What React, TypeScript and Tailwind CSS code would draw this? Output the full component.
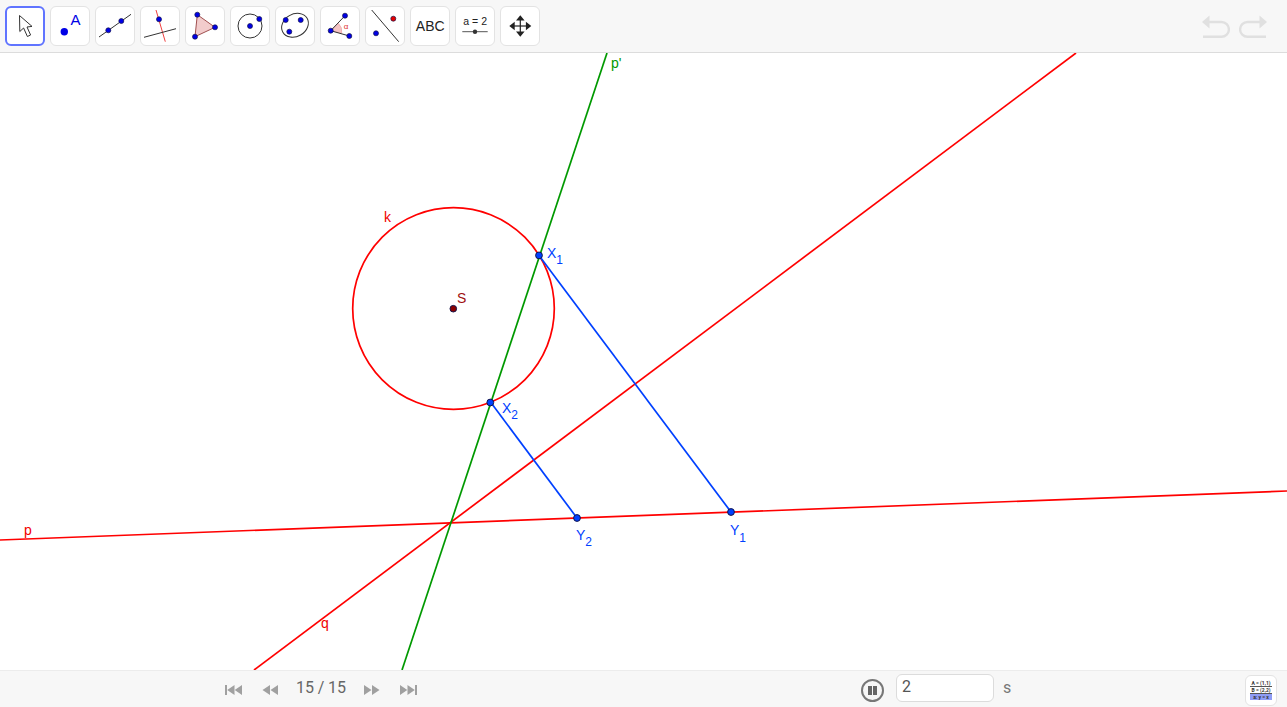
import React from 'react';

const BLUE = '#0000e6';

function Dot({ x, y, r = 2.5, fill = BLUE, line = 0.7 }: { x: number; y: number; r?: number; fill?: string; line?: number }) {
  return <circle cx={x} cy={y} r={r} fill={fill} stroke="#15154a" strokeWidth={line} />;
}

function ToolButton({ active, children }: { active?: boolean; children: React.ReactNode }) {
  return (
    <div
      className={
        active
          ? 'w-10 h-10 rounded-md bg-white border-2 border-[#6074ff] flex items-center justify-center'
          : 'w-10 h-10 rounded-md bg-white border border-[#e3e3e3] flex items-center justify-center'
      }
    >
      <svg width="36" height="36" viewBox="-1 0 36 36" className="shrink-0">
        {children}
      </svg>
    </div>
  );
}

const tools: React.ReactNode[] = [
  <path key="a" d="M11.5 7.5 L11.8 23.5 L15.6 20 L19.4 28.5 L22.6 27 L19 19 L24 18.4 Z" fill="#fff" stroke="#333" strokeWidth="1" strokeLinejoin="round" />,
  <g key="b">
    <circle cx="11.3" cy="23.7" r="3.7" fill={BLUE} />
    <text x="17.4" y="17" fontSize="15" fill={BLUE} fontFamily="'Liberation Sans', sans-serif">A</text>
  </g>,
  <g key="c">
    <line x1="1" y1="29" x2="33" y2="6.3" stroke="#333" strokeWidth="1" />
    <Dot x={10.3} y={22.3} />
    <Dot x={23.3} y={13} />
  </g>,
  <g key="d">
    <line x1="13" y1="2" x2="22.3" y2="33.7" stroke="#f04040" strokeWidth="1" />
    <line x1="1" y1="29.3" x2="33" y2="20.7" stroke="#333" strokeWidth="1" />
    <Dot x={16} y={11.3} />
  </g>,
  <g key="e">
    <path d="M9.3 6.7 L27 19.3 L7 28.7 Z" fill="#f2cccc" stroke="#a05050" strokeWidth="1" />
    <Dot x={9.3} y={6.7} />
    <Dot x={27} y={19.3} />
    <Dot x={7} y={28.7} />
  </g>,
  <g key="f">
    <circle cx="17" cy="18" r="12" fill="none" stroke="#333" strokeWidth="1" />
    <Dot x={17} y={18} />
    <Dot x={26.3} y={11} />
  </g>,
  <g key="g">
    <ellipse cx="17" cy="17.3" rx="14" ry="11.2" transform="rotate(-30 17 17.3)" fill="none" stroke="#333" strokeWidth="1" />
    <Dot x={7.7} y={12} />
    <Dot x={22.7} y={12} />
    <Dot x={11.3} y={23.7} />
  </g>,
  <g key="h">
    <path d="M7.7 22.7 L15.3 15.3 A11 11 0 0 1 18.7 25.3 Z" fill="#f5c4c4" stroke="#e89090" strokeWidth="0.5" />
    <path d="M22 7.7 L7.7 22.7 L26.3 28" fill="none" stroke="#333" strokeWidth="1" />
    <text x="20.8" y="21" fontSize="8" fill="#e03030" fontFamily="'Liberation Sans', sans-serif">α</text>
    <Dot x={22} y={7.7} />
    <Dot x={7.7} y={22.7} />
    <Dot x={26.3} y={28} />
  </g>,
  <g key="i">
    <line x1="3.7" y1="2" x2="30.7" y2="33.7" stroke="#333" strokeWidth="1" />
    <Dot x={25.3} y={10.7} fill="#e60000" />
    <Dot x={8} y={25.3} />
  </g>,
  <text key="j" x="17.2" y="23" textAnchor="middle" fontSize="14" fill="#222" fontFamily="'Liberation Sans', sans-serif">ABC</text>,
  <g key="k">
    <text x="17.2" y="17" textAnchor="middle" fontSize="10.5" fill="#222" fontFamily="'Liberation Sans', sans-serif">a = 2</text>
    <line x1="4.3" y1="23.7" x2="29.7" y2="23.7" stroke="#555" strokeWidth="1" />
    <circle cx="17" cy="23.7" r="2.2" fill="#333" />
  </g>,
  <g key="l" fill="#222" stroke="#222">
    <line x1="9" y1="18" x2="26" y2="18" strokeWidth="1.2" />
    <line x1="17.3" y1="10" x2="17.3" y2="26" strokeWidth="1.2" />
    <path d="M17.3 7.2 L21.6 12.6 L13 12.6 Z M17.3 28.8 L21.6 23.4 L13 23.4 Z M6.3 18 L11.7 13.7 L11.7 22.3 Z M28.3 18 L22.9 13.7 L22.9 22.3 Z" stroke="none" />
  </g>,
];

function Arrow({ dir, bar }: { dir: 'left' | 'right'; bar?: boolean }) {
  return (
    <svg width={bar ? 17 : 16} height="10" viewBox={bar ? '0 0 17 10' : '0 0 16 10'} className={dir === 'right' ? 'rotate-180' : ''}>
      {bar ? (
        <path d="M0 0 H2 V10 H0 Z M9.5 0 L2.2 5 L9.5 10 Z M17 0 L9.7 5 L17 10 Z" fill="#a0a0a0" />
      ) : (
        <path d="M8 0 L0.5 5 L8 10 Z M16 0 L8.5 5 L16 10 Z" fill="#a0a0a0" />
      )}
    </svg>
  );
}

function Label({ x, y, fill, text, sub, dy = 6 }: { x: number; y: number; fill: string; text: string; sub?: string; dy?: number }) {
  return (
    <text x={x} y={y} fill={fill} fontSize="14" fontFamily="'Liberation Sans', sans-serif">
      {text}
      {sub && (
        <tspan dy={dy} fontSize="12">
          {sub}
        </tspan>
      )}
    </text>
  );
}

export default function App() {
  return (
    <div className="w-[1287px] h-[707px] flex flex-col overflow-hidden bg-white font-['Roboto',sans-serif]">
      <div className="h-[53px] shrink-0 bg-[#f7f7f7] border-b border-[#dcdcdc] flex items-start pl-[5px] pt-[6px] pr-[20px]">
        <div className="flex gap-[5px]">
          {tools.map((tool, i) => (
            <ToolButton key={i} active={i === 0}>
              {tool}
            </ToolButton>
          ))}
        </div>
        <div className="ml-auto flex gap-[9px] mt-[9px]">
          <svg width="28" height="23" viewBox="0 0 28 23" fill="none">
            <path d="M0 7 L7.5 0.5 V13.5 Z" fill="#e0e0e0" />
            <path d="M7 7 H19.5 A7.4 7.4 0 0 1 19.5 21.8 H1" stroke="#e0e0e0" strokeWidth="2.4" />
          </svg>
          <svg width="28" height="23" viewBox="0 0 28 23" fill="none">
            <path d="M28 7 L20.5 0.5 V13.5 Z" fill="#e0e0e0" />
            <path d="M21 7 H8.5 A7.4 7.4 0 0 0 8.5 21.8 H27" stroke="#e0e0e0" strokeWidth="2.4" />
          </svg>
        </div>
      </div>

      <div className="flex-1 min-h-0 bg-white">
        <svg width="1287" height="617" viewBox="0 53 1287 617" className="block">
          <circle cx="453.5" cy="308.5" r="100.8" fill="none" stroke="#ff0000" strokeWidth="1.7" />
          <line x1="0" y1="540" x2="1287" y2="491" stroke="#ff0000" strokeWidth="1.7" />
          <line x1="254" y1="670" x2="1076" y2="53" stroke="#ff0000" strokeWidth="1.7" />
          <line x1="402" y1="670" x2="607" y2="53" stroke="#009900" strokeWidth="1.7" />
          <line x1="539" y1="255.5" x2="731" y2="512" stroke="#0040ff" strokeWidth="1.7" />
          <line x1="490.5" y1="402" x2="577" y2="518" stroke="#0040ff" strokeWidth="1.7" />
          <Dot x={453.3} y={308.7} r={3.3} fill="#8b0000" line={1} />
          <Dot x={539} y={255.4} r={3.4} fill="#0040ff" line={1} />
          <Dot x={490.3} y={402.5} r={3.4} fill="#0040ff" line={1} />
          <Dot x={577} y={518} r={3.4} fill="#0040ff" line={1} />
          <Dot x={731} y={512} r={3.4} fill="#0040ff" line={1} />
          <Label x={384} y={222} fill="#f00000" text="k" />
          <Label x={457} y={303} fill="#a01010" text="S" />
          <Label x={611} y={68} fill="#009900" text="p'" />
          <Label x={24} y={535} fill="#f00000" text="p" />
          <Label x={321} y={628} fill="#f00000" text="q" />
          <Label x={547} y={258} fill="#0040ff" text="X" sub="1" />
          <Label x={502} y={413} fill="#0040ff" text="X" sub="2" />
          <Label x={576} y={539.5} fill="#0040ff" text="Y" sub="2" />
          <Label x={730} y={535} fill="#0040ff" text="Y" sub="1" dy={7} />
        </svg>
      </div>

      <div className="h-[37px] shrink-0 bg-[#f7f7f7] border-t border-[#ececec] flex items-center pl-[225px] pr-[10px]">
        <div className="flex items-center gap-[20px] mt-[2px]">
          <Arrow dir="left" bar />
          <Arrow dir="left" />
        </div>
        <span className="ml-[18px] w-[50px] text-center text-base leading-5 tracking-[-0.1px] whitespace-nowrap text-[#666] -mt-[3px]">15 / 15</span>
        <div className="ml-[18px] flex items-center gap-[20px] mt-[2px]">
          <Arrow dir="right" />
          <Arrow dir="right" bar />
        </div>
        <div className="ml-[444px] w-[23px] h-[23px] rounded-full border-2 border-[#777] bg-[#f7f7f7] flex items-center justify-center gap-[1.5px] mt-[2px]">
          <span className="w-[3.5px] h-[9px] bg-[#666]" />
          <span className="w-[3.5px] h-[9px] bg-[#666]" />
        </div>
        <div className="ml-[12px] w-[98px] h-[28px] bg-white border border-[#dcdcdc] rounded-md text-base leading-[24px] text-[#555] pl-[5px] -mt-[2px]">2</div>
        <span className="ml-[9px] text-base text-[#777] -mt-[2px]">s</span>
        <div className="ml-auto w-[32px] h-[31px] rounded-md bg-white border border-[#e3e3e3] flex items-center justify-center mt-[2px]">
          <div className="w-[22px] flex flex-col items-center text-[5px] leading-[6px] font-bold text-[#333] whitespace-nowrap">
            <span className="border-b border-[#555] w-full text-center">A = (1,1)</span>
            <span className="border-b border-[#555] w-full text-center">B = (2,2)</span>
            <span className="bg-[#8f9cf5] w-full text-center">a: y = x</span>
          </div>
        </div>
      </div>
    </div>
  );
}
